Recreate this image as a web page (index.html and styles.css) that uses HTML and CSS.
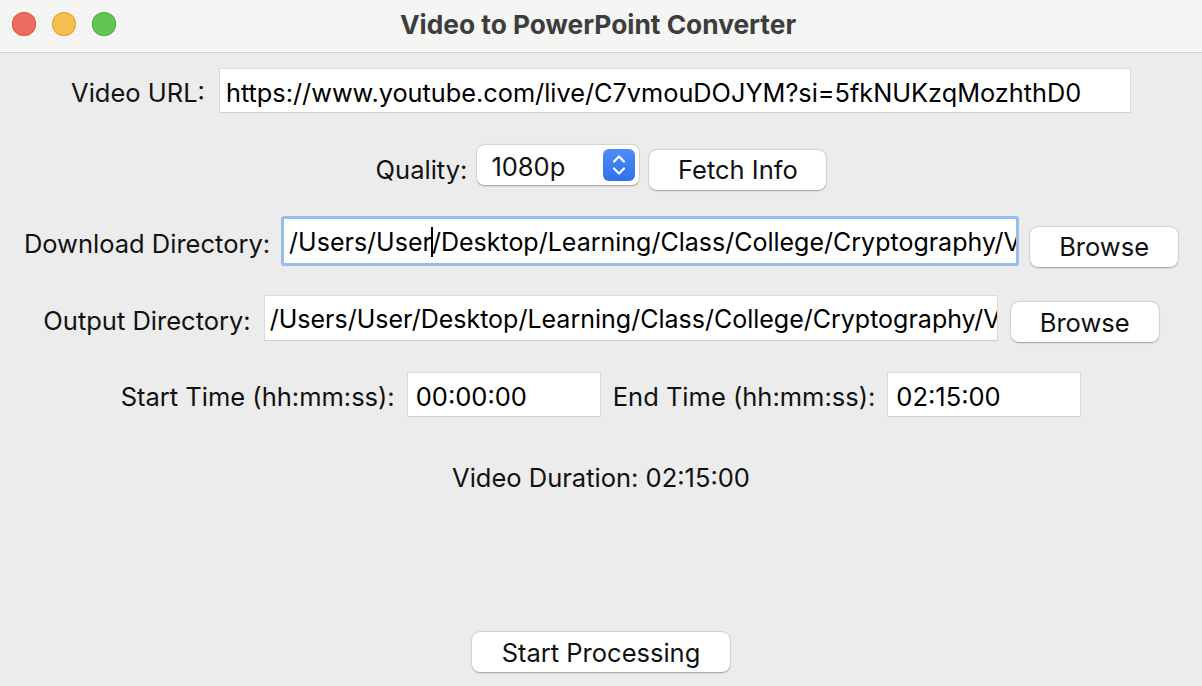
FILE: index.html
```html
<!DOCTYPE html>
<html>
<head>
<meta charset="utf-8">
<title>Video to PowerPoint Converter</title>
<link rel="stylesheet" href="styles.css">
</head>
<body>
<div class="window">
  <header class="titlebar">
    <div class="lights">
      <span class="light red"></span>
      <span class="light yellow"></span>
      <span class="light green"></span>
    </div>
    <div class="title">Video to PowerPoint Converter</div>
  </header>
  <main class="content">
    <div class="row row-url">
      <span class="label">Video URL:</span>
      <div class="field field-url">https://www.youtube.com/live/C7vmouDOJYM?si=5fkNUKzqMozhthD0</div>
    </div>
    <div class="row row-quality">
      <span class="label">Quality:</span>
      <div class="select">
        <span class="select-value">1080p</span>
        <span class="stepper">
          <svg width="32" height="32" viewBox="0 0 32 32">
            <path d="M11 12.5 L16 7.5 L21 12.5" fill="none" stroke="#fff" stroke-width="2.2" stroke-linecap="round" stroke-linejoin="round"/>
            <path d="M11 19.5 L16 24.5 L21 19.5" fill="none" stroke="#fff" stroke-width="2.2" stroke-linecap="round" stroke-linejoin="round"/>
          </svg>
        </span>
      </div>
      <button class="btn btn-fetch">Fetch Info</button>
    </div>
    <div class="row row-download">
      <span class="label">Download Directory:</span>
      <div class="field field-dir focused">/Users/User<span class="caret"></span>/Desktop/Learning/Class/College/Cryptography/V</div>
      <button class="btn btn-browse">Browse</button>
    </div>
    <div class="row row-output">
      <span class="label">Output Directory:</span>
      <div class="field field-out">/Users/User/Desktop/Learning/Class/College/Cryptography/V</div>
      <button class="btn btn-browse">Browse</button>
    </div>
    <div class="row row-time">
      <span class="label">Start Time (hh:mm:ss):</span>
      <div class="field field-time">00:00:00</div>
      <span class="label label-end">End Time (hh:mm:ss):</span>
      <div class="field field-time">02:15:00</div>
    </div>
    <div class="row row-duration">
      <span class="label">Video Duration: 02:15:00</span>
    </div>
    <div class="row row-start">
      <button class="btn btn-start">Start Processing</button>
    </div>
  </main>
</div>
</body>
</html>
```

FILE: styles.css
```css
* { box-sizing: border-box; }
html, body {
  margin: 0;
  padding: 0;
  width: 1202px;
  height: 686px;
  overflow: hidden;
  background: #ececec;
  font-family: Inter, "Liberation Sans", Arial, sans-serif;
  color: #111;
}
.window {
  width: 1202px;
  height: 686px;
  display: flex;
  flex-direction: column;
}
.titlebar {
  height: 53px;
  flex: none;
  background: #f5f5f3;
  border-bottom: 1px solid #d2d2d2;
  position: relative;
  display: flex;
  align-items: center;
  justify-content: center;
}
.lights {
  position: absolute;
  left: 12px;
  top: 12px;
  display: flex;
  gap: 16px;
}
.light {
  width: 24px;
  height: 24px;
  border-radius: 50%;
  display: block;
}
.red { background: #ee6b5f; box-shadow: inset 0 0 0 1px #d95a4e; }
.yellow { background: #f6be50; box-shadow: inset 0 0 0 1px #dea53a; }
.green { background: #62c655; box-shadow: inset 0 0 0 1px #4eab41; }
.title {
  font-weight: bold;
  font-size: 26.3px;
  color: #3d3d3d;
  margin-top: -4px;
  margin-right: 6px;
}
.content {
  flex: 1;
  display: flex;
  flex-direction: column;
  padding-top: 15px;
}
.row {
  display: flex;
  justify-content: center;
  align-items: center;
  font-size: 25.5px;
}
.label { white-space: nowrap; padding-top: 3px; }
.field {
  background: #fff;
  border: 1px solid #dadada;
  border-bottom-color: #cfcfcf;
  height: 45px;
  line-height: 43px;
  padding: 2px 0 0 6px;
  white-space: nowrap;
  overflow: hidden;
  font-size: 25.5px;
  color: #000;
}
.row-url { height: 45px; gap: 14px; }
.field-url { width: 912px; font-size: 25.3px; }
.row-quality { margin-top: 32px; height: 45px; gap: 10px; }
.select {
  width: 162px;
  height: 40px;
  background: #fff;
  border-radius: 7px;
  box-shadow: 0 0.5px 1.5px rgba(0,0,0,0.3), 0 0 0 0.5px rgba(0,0,0,0.08);
  display: flex;
  align-items: center;
  justify-content: space-between;
  padding: 0 4px 0 14px;
  margin-top: -6px;
}
.select-value { padding-top: 3px; }
.stepper {
  width: 32px;
  height: 32px;
  border-radius: 6px;
  background: linear-gradient(#4d8ef8, #2f71ea);
  display: block;
}
.stepper svg { display: block; }
.btn {
  font-family: inherit;
  font-size: 25.5px;
  color: #111;
  background: #fff;
  border: none;
  border-radius: 8px;
  height: 40px;
  padding: 0;
  box-shadow: 0 0.5px 1.5px rgba(0,0,0,0.3), 0 0 0 0.5px rgba(0,0,0,0.08);
}
.btn-fetch { width: 177px; margin-top: 4px; }
.row-download { margin-top: 27px; height: 49px; gap: 11px; }
.field-dir {
  width: 738px;
  height: 50px;
  line-height: 42px;
  border: 3px solid #9bbcef;
  border-radius: 3px;
  padding: 2px 0 0 5px;
  margin-top: -1px;
  font-size: 25px;
}
.caret {
  display: inline-block;
  width: 2px;
  height: 30px;
  background: #000;
  vertical-align: middle;
  margin: -4px -1px 0 -1px;
}
.btn-browse { width: 148px; margin-top: 7px; }
.row-download .btn-browse { margin-top: 10px; }
.row-output { margin-top: 29px; height: 47px; gap: 13px; }
.field-out { width: 734px; height: 46px; margin-top: -2px; font-size: 25px; padding-left: 5px; }
.row-time { margin-top: 30px; height: 45px; gap: 12px; }
.field-time { width: 194px; padding-left: 8px; }
.row-duration { margin-top: 45px; height: 30px; }
.row-duration .label { padding-top: 0; }
.row-start { margin-top: 140px; height: 40px; }
.btn-start { width: 258px; }
```
